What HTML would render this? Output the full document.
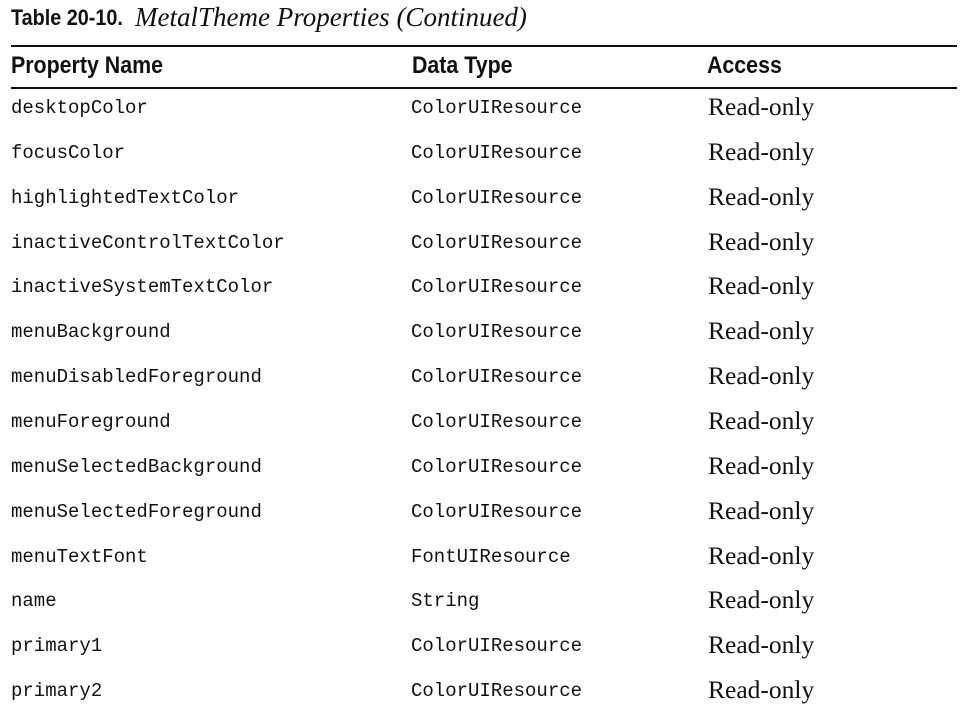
<!DOCTYPE html>
<html><head><style>
body{margin:0;width:971px;height:714px;background:#fff;position:relative;overflow:hidden;color:#111}
.t{position:absolute;white-space:nowrap}
.title{left:11px;top:2px;height:30px}
.title b{position:absolute;left:0;top:3px;font-family:"Liberation Sans",sans-serif;font-size:22px;display:inline-block;transform:scaleX(.9);transform-origin:left}
.title i{position:absolute;left:124px;top:0;font-family:"Liberation Serif",serif;font-size:27px}
.line{position:absolute;left:11px;width:946px;background:#111}
.h{font-family:"Liberation Sans",sans-serif;font-weight:bold;font-size:24px;top:52px;transform:scaleX(.89);transform-origin:left}
.m{font-family:"Liberation Mono",monospace;font-size:19px}
.s{font-family:"Liberation Serif",serif;font-size:25.5px}
</style></head><body>
<div class="t title"><b>Table 20-10.</b><i>MetalTheme Properties (Continued)</i></div>
<div class="line" style="top:45px;height:2px"></div>
<div class="t h" style="left:11px">Property Name</div>
<div class="t h" style="left:412px">Data Type</div>
<div class="t h" style="left:707px">Access</div>
<div class="line" style="top:87px;height:2px"></div>
<div id="rows"></div>
<script>
var d=[["desktopColor","ColorUIResource"],["focusColor","ColorUIResource"],["highlightedTextColor","ColorUIResource"],["inactiveControlTextColor","ColorUIResource"],["inactiveSystemTextColor","ColorUIResource"],["menuBackground","ColorUIResource"],["menuDisabledForeground","ColorUIResource"],["menuForeground","ColorUIResource"],["menuSelectedBackground","ColorUIResource"],["menuSelectedForeground","ColorUIResource"],["menuTextFont","FontUIResource"],["name","String"],["primary1","ColorUIResource"],["primary2","ColorUIResource"]];
var h="";d.forEach(function(r,i){var c=107+i*44.85;
h+='<div class="t m" style="left:11px;top:'+(c-10)+'px">'+r[0]+'</div>';
h+='<div class="t m" style="left:411px;top:'+(c-10)+'px">'+r[1]+'</div>';
h+='<div class="t s" style="left:708px;top:'+(c-15)+'px">Read-only</div>';});
document.getElementById("rows").innerHTML=h;
</script>
</body></html>
